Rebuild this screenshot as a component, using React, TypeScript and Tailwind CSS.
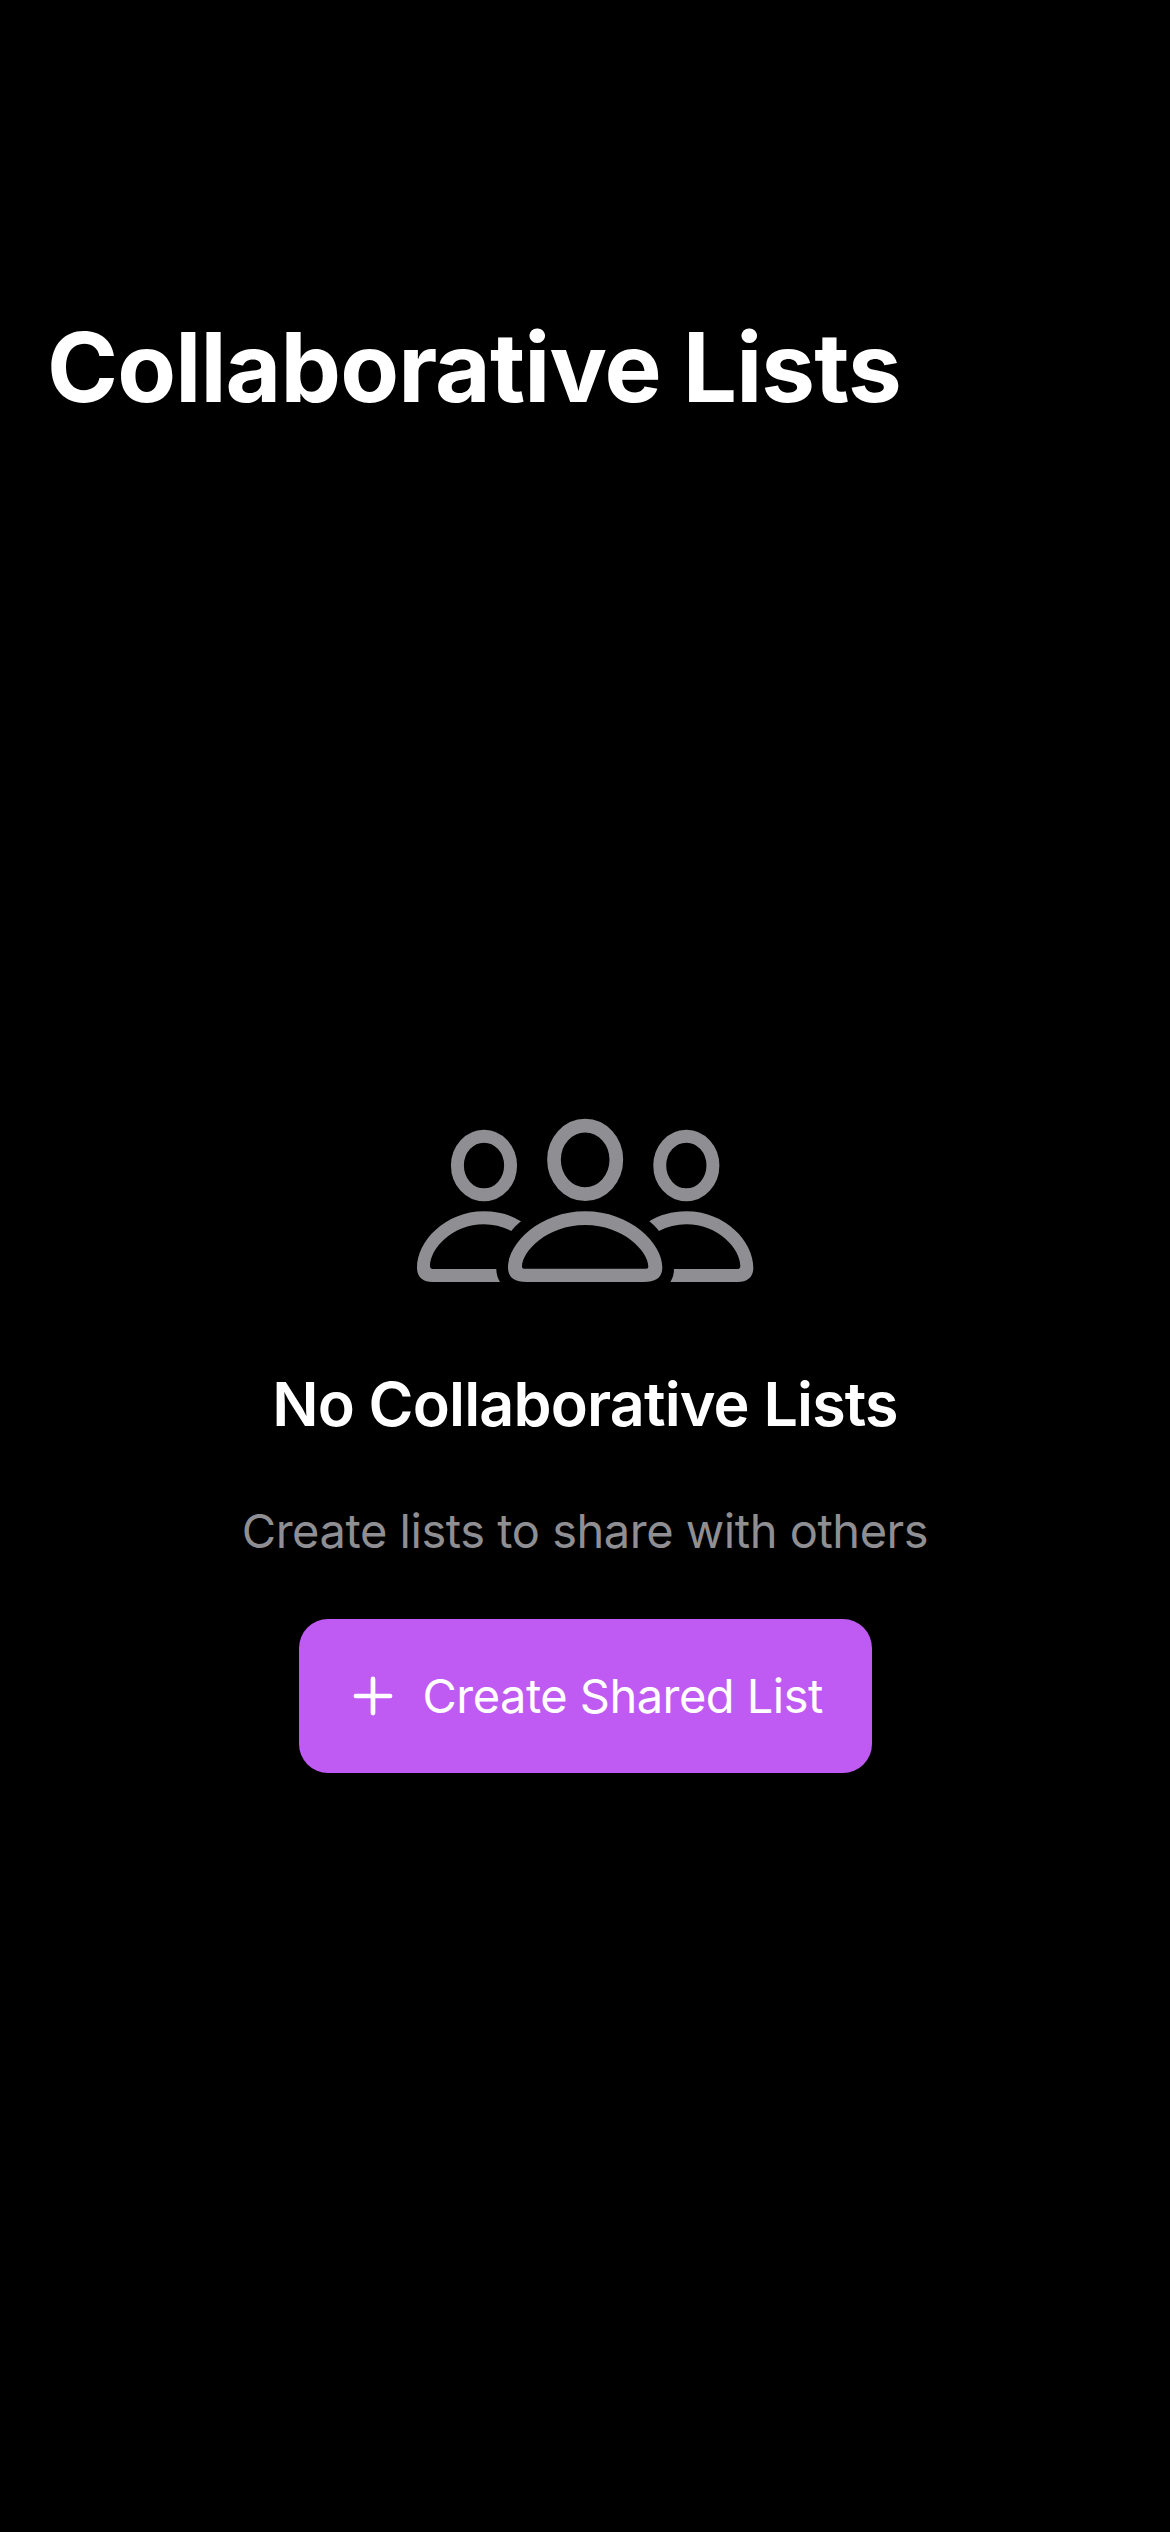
function SidePerson() {
  return (
    <>
      <ellipse cx="252" cy="196.5" rx="79.75" ry="88" fill="none" stroke="currentColor" strokeWidth="38.8" />
      <path d="M300 546H98C67 546 51 530 51 503C51 425 135 334 252 334C295 334 333 345 363 364C352 373 343 382 334 393C309 380 281 373 252 373C158 373 90 445 90 499Q90 507 96 507H289C289 522 293 535 300 546Z" />
    </>
  );
}

function PeopleIcon() {
  return (
    <svg viewBox="30 45 1050 510" className="h-[170px] w-[350px] text-[#8e8e93]" fill="currentColor" aria-hidden="true">
      <SidePerson />
      <g transform="translate(1111 0) scale(-1 1)">
        <SidePerson />
      </g>
      <ellipse cx="555.5" cy="179.5" rx="93.5" ry="102.7" fill="none" stroke="currentColor" strokeWidth="41" />
      <path
        fillRule="evenodd"
        d="M380 546C342 546 324 532 324 502C324 430 420 334 555.5 334C691 334 787 430 787 502C787 532 769 546 731 546ZM372 506H739Q745 506 745 500C745 455 671 375 555.5 375C440 375 366 455 366 500Q366 506 372 506Z"
      />
    </svg>
  );
}

function PlusIcon() {
  return (
    <svg viewBox="0 0 40 40" className="size-10 shrink-0" fill="none" stroke="currentColor" strokeWidth="4.7" strokeLinecap="round" aria-hidden="true">
      <path d="M20 2.9V37.1M2.9 20H37.1" />
    </svg>
  );
}

export default function App() {
  return (
    <div className="flex h-[2532px] w-[1170px] flex-col bg-black font-['Inter',sans-serif] text-white">
      <header className="pt-[307px] pl-[47px]">
        <h1 className="text-[96px] leading-[120px] font-bold tracking-[-0.84px] whitespace-nowrap">Collaborative Lists</h1>
      </header>
      <main className="flex flex-col items-center pt-[688px]">
        <PeopleIcon />
        <h2 className="mt-20 text-[61px] leading-[78px] font-semibold tracking-[-0.84px] whitespace-nowrap">No Collaborative Lists</h2>
        <p className="mt-[58px] text-[47px] leading-[60px] tracking-[-0.47px] whitespace-nowrap text-[#8e8e93]">
          Create lists to share with others
        </p>
        <button className="mt-[58px] flex h-[154px] w-[573px] items-center gap-[30px] rounded-[29px] bg-[#bf5af2] pl-[54px] text-[47px] leading-[60px] tracking-[-0.53px] whitespace-nowrap">
          <PlusIcon />
          Create Shared List
        </button>
      </main>
    </div>
  );
}
